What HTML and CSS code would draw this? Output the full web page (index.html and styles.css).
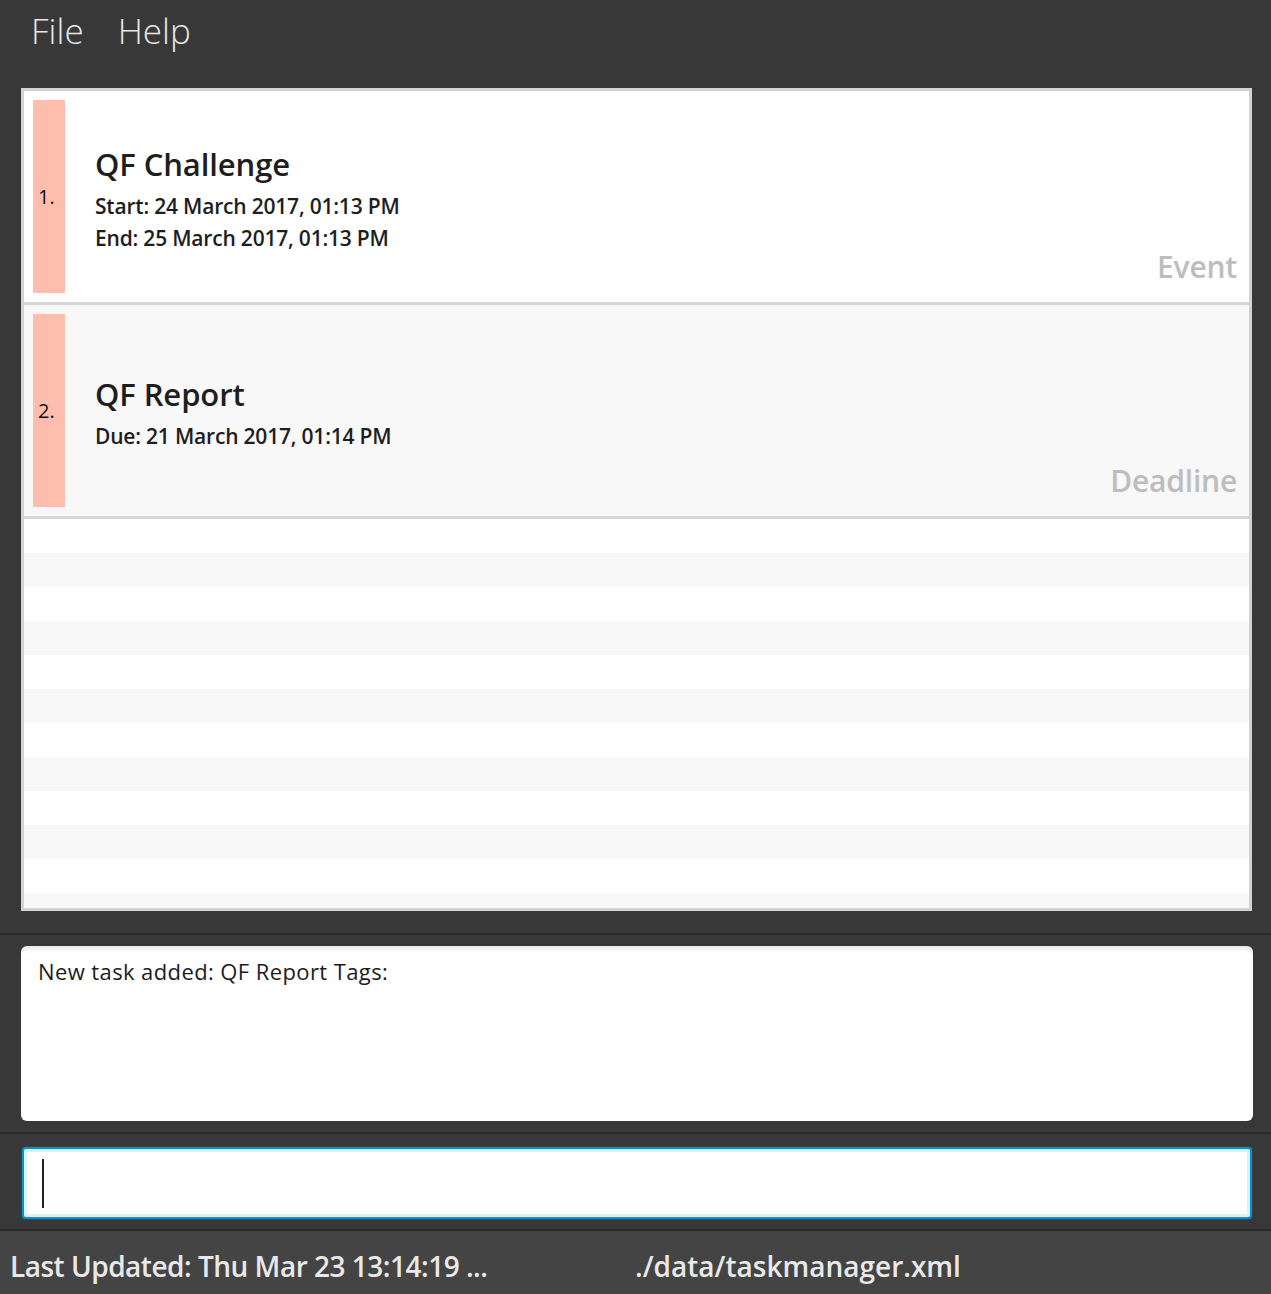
FILE: index.html
```html
<!DOCTYPE html>
<html lang="en">
<head>
<meta charset="utf-8">
<title>Task Manager</title>
<link rel="stylesheet" href="styles.css">
</head>
<body>
<div class="app">
  <nav class="menubar">
    <span class="menu-item">File</span>
    <span class="menu-item">Help</span>
  </nav>

  <section class="list-pane">
    <div class="task-list">
      <div class="task-card">
        <div class="index-strip"><span class="index">1.</span></div>
        <div class="task-info">
          <div class="task-title">QF Challenge</div>
          <div class="task-detail">Start: 24 March 2017, 01:13 PM</div>
          <div class="task-detail">End: 25 March 2017, 01:13 PM</div>
        </div>
        <div class="task-type">Event</div>
      </div>
      <div class="task-card alt">
        <div class="index-strip"><span class="index">2.</span></div>
        <div class="task-info">
          <div class="task-title">QF Report</div>
          <div class="task-detail">Due: 21 March 2017, 01:14 PM</div>
        </div>
        <div class="task-type">Deadline</div>
      </div>
      <div class="filler"></div>
    </div>
  </section>

  <section class="result-pane">
    <div class="result-box">New task added: QF Report Tags:</div>
  </section>

  <section class="command-pane">
    <div class="command-box"><span class="caret"></span></div>
  </section>

  <footer class="statusbar">
    <div class="status-cell first">Last Updated: Thu Mar 23 13:14:19 ...</div>
    <div class="status-cell second">./data/taskmanager.xml</div>
  </footer>
</div>
</body>
</html>
```

FILE: styles.css
```css
* { box-sizing: border-box; }

html, body {
  margin: 0;
  padding: 0;
  background: #383838;
}

body {
  font-family: "Open Sans", "Noto Sans", sans-serif;
  width: 1271px;
  height: 1294px;
  overflow: hidden;
}

.app {
  display: flex;
  flex-direction: column;
  height: 1294px;
}

/* Menu */
.menubar {
  height: 88px;
  flex: none;
  display: flex;
  align-items: flex-start;
  padding: 8px 0 0 31px;
  gap: 34px;
}

.menu-item {
  color: #e6e6e6;
  font-size: 35px;
  font-weight: 300;
  line-height: 46px;
}

/* Task list */
.list-pane {
  flex: none;
  padding: 0 19px 0 21px;
  height: 847px;
  border-bottom: 2px solid #2a2a2a;
}

.task-list {
  height: 823px;
  border: 3px solid #d3d3d3;
  background: #ffffff;
  display: flex;
  flex-direction: column;
  overflow: hidden;
}

.task-card {
  height: 214px;
  flex: none;
  display: flex;
  padding: 9px 12px 9px 9px;
  background: #ffffff;
  border-bottom: 3px solid #d6d6d6;
}

.task-card.alt {
  background: #f8f8f8;
}

.index-strip {
  width: 32px;
  flex: none;
  background: #ffbdae;
  display: flex;
  align-items: center;
  padding-left: 5px;
}

.index {
  font-size: 20px;
  color: #111111;
  font-weight: 500;
}

.task-info {
  flex: 1;
  display: flex;
  flex-direction: column;
  justify-content: center;
  padding: 3px 0 0 30px;
  color: #1e1e1e;
}

.task-title {
  font-size: 31px;
  font-weight: 600;
  line-height: 42px;
  letter-spacing: -0.1px;
  margin-bottom: 5px;
}

.task-detail {
  font-size: 21px;
  font-weight: 600;
  line-height: 32px;
  letter-spacing: -0.2px;
}

.task-type {
  align-self: flex-end;
  color: #bdbdbd;
  font-size: 30px;
  font-weight: 600;
  line-height: 36px;
  margin-bottom: 8px;
  letter-spacing: -0.2px;
}

.filler {
  flex: 1;
  background: repeating-linear-gradient(
    to bottom,
    #ffffff 0px,
    #ffffff 34px,
    #f8f8f8 34px,
    #f8f8f8 68px
  );
}

/* Result */
.result-pane {
  flex: none;
  padding: 11px 18px 11px 21px;
  border-bottom: 2px solid #2a2a2a;
}

.result-box {
  height: 175px;
  background: #ffffff;
  border-radius: 6px;
  box-shadow: inset 0 6px 6px -4px rgba(0, 0, 0, 0.12);
  padding: 10px 17px;
  font-size: 22px;
  color: #1c1c1c;
  line-height: 30px;
  letter-spacing: 0.4px;
}

/* Command */
.command-pane {
  flex: none;
  padding: 13px 19px 10px 22px;
  border-bottom: 2px solid #2a2a2a;
}

.command-box {
  height: 72px;
  background: #ffffff;
  border: 2px solid #0095cf;
  border-radius: 4px;
  box-shadow: inset 0 0 0 3px #dcf0f8, 0 0 2px rgba(0, 149, 207, 0.6);
  display: flex;
  align-items: center;
  padding-left: 18px;
}

.caret {
  width: 2px;
  height: 49px;
  background: #222222;
}

/* Status bar */
.statusbar {
  flex: 1;
  background: #444444;
  display: flex;
  align-items: center;
  padding-top: 6px;
}

.status-cell {
  width: 635px;
  color: #e9e9e9;
  font-size: 28px;
  font-weight: 600;
  white-space: nowrap;
}

.status-cell.first {
  padding-left: 10px;
  letter-spacing: -0.5px;
}

.status-cell.second {
  letter-spacing: 0px;
}
```
